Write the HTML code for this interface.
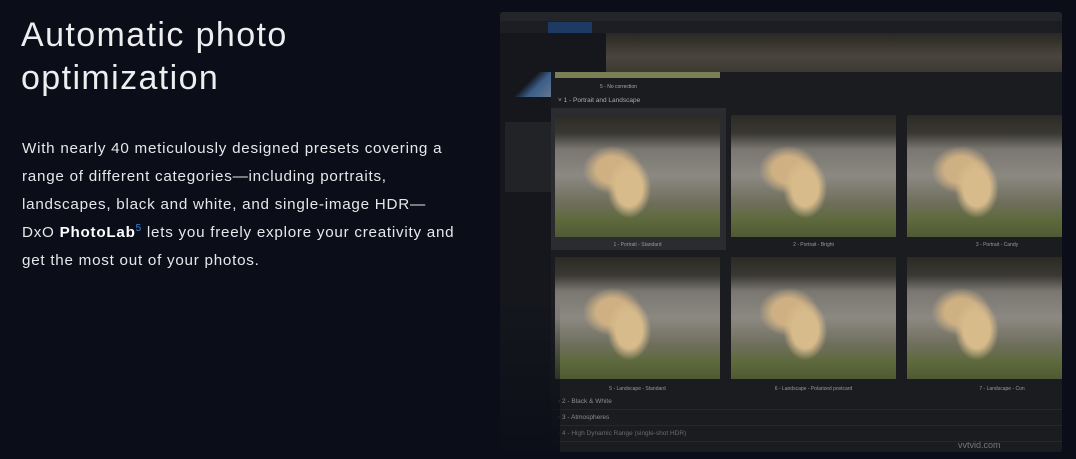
<!DOCTYPE html>
<html><head><meta charset="utf-8"><style>
*{margin:0;padding:0;box-sizing:border-box}
body{width:1076px;height:459px;overflow:hidden;background:#0b0e18;font-family:"Liberation Sans",sans-serif;position:relative}
h1{position:absolute;left:21px;top:14px;font-weight:normal;font-size:34px;line-height:43px;color:#eeeef0;letter-spacing:1.4px;white-space:nowrap}
p{position:absolute;left:22px;top:135px;width:460px;font-size:15.2px;line-height:28px;color:#e6e7ea;letter-spacing:0.75px;white-space:nowrap}
p b{font-weight:bold;color:#fff}
p sup{color:#3a86d8;font-size:10px;line-height:0;vertical-align:6px}
.win{position:absolute;left:500px;top:12px;width:562px;height:440px;background:#15171c;border-radius:3px;overflow:hidden}
.top{position:absolute;left:0;top:0;width:562px;height:21px;background:#1c1e23}
.top2{position:absolute;left:0;top:0;width:562px;height:9px;background:#232529}
.tab{position:absolute;left:48px;top:10px;width:44px;height:11px;background:#1d3a63}
.left{position:absolute;left:0;top:21px;width:100px;height:419px;background:#15171d}
.bgphoto{position:absolute;left:106px;top:21px;width:456px;height:40px;background:linear-gradient(180deg,#2a2824,#4a463e 60%,#3a3831)}
.ov{position:absolute;left:51px;top:60px;width:511px;height:380px;background:#1b1c1f}
.fade{position:absolute;left:500px;top:300px;width:60px;height:159px;background:linear-gradient(180deg,rgba(11,14,24,0),#0b0e18)}
.img{position:absolute;width:165px;height:122px;background:
radial-gradient(ellipse 22px 30px at 45% 60%,#d8bb8a 60%,rgba(216,187,138,0) 100%),
radial-gradient(ellipse 30px 24px at 35% 45%,#cfb083 55%,rgba(207,176,131,0) 100%),
linear-gradient(180deg,#2b2a25 0%,#3a3833 15%,#7a7771 28%,#8c8882 50%,#6f6f5c 72%,#5f6a3e 85%,#4f5a33 100%)}
.sel{position:absolute;left:51px;top:96px;width:175px;height:142px;background:#2b2c30}
.lb{position:absolute;font-size:5px;color:#9a9a9a;text-align:center;width:165px}
.sec{position:absolute;left:58px;font-size:6.5px;color:#8b8c8f}
.ln{position:absolute;left:51px;width:511px;height:1px;background:#26272b}
</style></head><body>
<h1>Automatic photo<br>optimization</h1>
<p>With nearly 40 meticulously designed presets covering a<br>range of different categories—including portraits,<br>landscapes, black and white, and single-image HDR—<br>DxO <b>PhotoLab</b><sup>5</sup> lets you freely explore your creativity and<br>get the most out of your photos.</p>
<div class="win">
<div class="top"></div><div class="top2"></div><div class="tab"></div>
<div class="left"></div>
<div style="position:absolute;left:10px;top:60px;width:45px;height:25px;background:linear-gradient(135deg,#15171d 40%,#3c5e89 60%,#6a7a90)"></div>
<div style="position:absolute;left:5px;top:110px;width:50px;height:70px;background:#222326"></div>
<div class="bgphoto"></div>
<div class="ov"></div>
<div style="position:absolute;left:55px;top:60px;width:165px;height:6px;background:#7c7f55"></div>
<div style="position:absolute;left:100px;top:72px;font-size:5px;color:#aaa;width:60px">5 - No correction</div>
<div class="sec" style="top:85px;color:#aaa">˅ 1 - Portrait and Landscape</div>
<div class="sel"></div>
<div class="img" style="left:55px;top:103px"></div>
<div class="img" style="left:231px;top:103px"></div>
<div class="img" style="left:407px;top:103px;width:155px"></div>
<div class="lb" style="left:55px;top:230px">1 - Portrait - Standard</div>
<div class="lb" style="left:231px;top:230px">2 - Portrait - Bright</div>
<div class="lb" style="left:407px;top:230px;width:180px">3 - Portrait - Candy</div>
<div class="img" style="left:55px;top:245px"></div>
<div class="img" style="left:231px;top:245px"></div>
<div class="img" style="left:407px;top:245px;width:155px"></div>
<div class="lb" style="left:55px;top:374px">5 - Landscape - Standard</div>
<div class="lb" style="left:231px;top:374px">6 - Landscape - Polarized postcard</div>
<div class="lb" style="left:407px;top:374px;width:190px">7 - Landscape - Con</div>
<div class="sec" style="top:386px">› 2 - Black &amp; White</div>
<div class="ln" style="top:397px"></div>
<div class="sec" style="top:402px">› 3 - Atmospheres</div>
<div class="ln" style="top:413px"></div>
<div class="sec" style="top:418px;color:#6a6b6e">› 4 - High Dynamic Range (single-shot HDR)</div>
<div class="ln" style="top:429px"></div>
</div>
<div class="fade"></div>
<div style="position:absolute;left:958px;top:440px;font-size:9px;color:#777">vvtvid.com</div>
</body></html>
